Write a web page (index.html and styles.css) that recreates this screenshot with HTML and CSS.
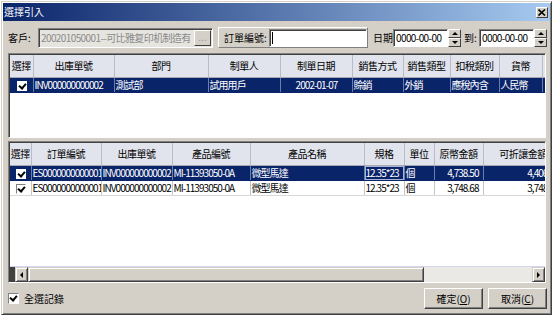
FILE: index.html
```html
<!DOCTYPE html>
<html>
<head>
<meta charset="utf-8">
<link rel="stylesheet" href="styles.css">
</head>
<body>
<div class="window">
  <div class="titlebar">
    <span class="title">選擇引入</span>
    <span class="close"><svg width="8" height="7" viewBox="0 0 8 7"><path d="M0.5 0.5 L7 6.5 M7 0.5 L0.5 6.5" stroke="#000" stroke-width="1.6" fill="none"/></svg></span>
  </div>
  <div class="content">
    <div class="toprow">
      <span class="lbl cust">客戶:</span>
      <div class="combo">
        <span class="combotxt">200201050001--可比雅复印机制造有</span>
        <span class="dots">...</span>
      </div>
      <div class="ordergroup">
        <span class="lbl">訂單編號:</span>
        <div class="field order"><span class="caret"></span></div>
      </div>
      <span class="lbl date-lbl">日期</span>
      <div class="date">
        <div class="field datefield">0000-00-00</div>
        <div class="spin"><span class="sb up"><i></i></span><span class="sb down"><i></i></span></div>
      </div>
      <span class="lbl to-lbl">到:</span>
      <div class="date">
        <div class="field datefield">0000-00-00</div>
        <div class="spin"><span class="sb up"><i></i></span><span class="sb down"><i></i></span></div>
      </div>
    </div>

    <div class="grid topgrid">
      <table class="tbl top">
        <colgroup>
          <col style="width:23px"><col style="width:81px"><col style="width:94px"><col style="width:72px"><col style="width:72px"><col style="width:51px"><col style="width:47px"><col style="width:49px"><col style="width:43px"><col style="width:3px">
        </colgroup>
        <thead>
          <tr><th>選擇</th><th>出庫單號</th><th>部門</th><th>制單人</th><th>制單日期</th><th>銷售方式</th><th>銷售類型</th><th>扣稅類別</th><th>貨幣</th><th></th></tr>
        </thead>
        <tbody>
          <tr class="sel"><td class="c"><span class="chk on"></span></td><td>INV000000000002</td><td>測試部</td><td>試用用戶</td><td class="c">2002-01-07</td><td>賒銷</td><td>外銷</td><td>應稅內含</td><td>人民幣</td><td></td></tr>
        </tbody>
      </table>
    </div>

    <div class="grid botgrid">
      <div class="gbody">
        <table class="tbl bot">
          <colgroup>
            <col style="width:21px"><col style="width:70px"><col style="width:71px"><col style="width:78px"><col style="width:114px"><col style="width:40px"><col style="width:30px"><col style="width:49px"><col style="width:80px">
          </colgroup>
          <thead>
            <tr><th>選擇</th><th>訂單編號</th><th>出庫單號</th><th>產品編號</th><th>產品名稱</th><th>規格</th><th>單位</th><th>原幣金額</th><th>可折讓金額</th></tr>
          </thead>
          <tbody>
            <tr class="sel"><td class="c"><span class="chk on"></span></td><td>ES0000000000001</td><td>INV000000000002</td><td>MI-11393050-0A</td><td>微型馬達</td><td class="focus">12.35*23</td><td>個</td><td class="r">4,738.50</td><td class="r">4,406.81</td></tr>
            <tr><td class="c"><span class="chk"></span></td><td>ES0000000000001</td><td>INV000000000002</td><td>MI-11393050-0A</td><td>微型馬達</td><td>12.35*23</td><td>個</td><td class="r">3,748.68</td><td class="r">3,748.68</td></tr>
          </tbody>
        </table>
      </div>
      <div class="hscroll">
        <span class="hs-dark"></span>
        <span class="hs-btn"><i class="arr-l"></i></span>
        <span class="hs-thumb"></span>
        <span class="hs-track"></span>
        <span class="hs-btn"><i class="arr-r"></i></span>
      </div>
    </div>

    <div class="bottomrow">
      <label class="selall"><span class="chk big"></span><span>全選記錄</span></label>
      <div class="buttons">
        <button class="btn">確定(<u>O</u>)</button>
        <button class="btn">取消(<u>C</u>)</button>
      </div>
    </div>
  </div>
</div>
</body>
</html>
```
FILE: styles.css
```css
* { box-sizing: border-box; margin: 0; padding: 0; }
body {
  width: 553px; height: 316px; overflow: hidden;
  background: #fff;
  font-family: "Noto Sans CJK TC", "Liberation Sans", sans-serif;
  font-size: 10px; color: #000;
}
.window {
  margin: 1px 0 0 1px;
  width: 551px; height: 314px;
  background: #d4d0c8;
  border: 1px solid; border-color: #d4d0c8 #404040 #404040 #d4d0c8;
  box-shadow: inset 1px 1px #fff, inset -1px -1px #808080;
  padding: 1px;
  display: flex; flex-direction: column;
}
.titlebar {
  height: 18px; flex: none;
  background: linear-gradient(to right, #0a246a, #a6caf0);
  display: flex; align-items: center; justify-content: space-between;
  padding: 0 2px 0 1px;
}
.title { color: #fff; font-size: 10px; line-height: 12px; }
.close {
  width: 12px; height: 11px;
  background: #d4d0c8;
  border: 1px solid; border-color: #fff #404040 #404040 #fff;
  display: flex; align-items: center; justify-content: center;
}
.content { flex: 1; padding: 6px 3px 0 5px; display: flex; flex-direction: column; }

/* top row */
.toprow { height: 21px; display: flex; align-items: center; flex: none; }
.lbl { white-space: nowrap; line-height: 12px; }
.cust { width: 30px; }
.combo {
  width: 175px; height: 20px; display: flex; align-items: center;
  background: #e6e4df;
  border: 1px solid; border-color: #808080 #fff #fff #808080;
  box-shadow: inset 1px 1px #404040;
  padding: 0 1px 0 2px; overflow: hidden;
}
.combotxt { flex: 1; min-width: 0; overflow: hidden; white-space: nowrap; color: #8a8a8a; letter-spacing: -0.6px; }
.dots {
  flex: none; width: 17px; height: 16px; line-height: 12px;
  text-align: center; color: #9a9a9a;
  background: #d4d0c8;
  border: 1px solid; border-color: #fff #404040 #404040 #fff;
}
.ordergroup {
  margin-left: 5px; width: 150px; height: 21px;
  display: flex; align-items: center;
  border: 1px solid; border-color: #fff #808080 #808080 #fff;
  padding-left: 5px;
}
.field {
  background: #fff; height: 18px;
  border: 1px solid; border-color: #808080 #fff #fff #808080;
  box-shadow: inset 1px 1px #404040;
  display: flex; align-items: center;
}
.order { flex: 1; margin-left: 2px; padding-left: 2px; }
.caret { width: 1px; height: 12px; background: #000; }
.date-lbl { margin-left: 5px; width: 20px; }
.to-lbl { margin-left: 3px; width: 15px; }
.date { display: flex; align-items: center; }
.datefield { width: 55px; padding-left: 2px; letter-spacing: -0.6px; white-space: nowrap; overflow: hidden; }
.spin { width: 13px; height: 18px; display: flex; flex-direction: column; }
.sb {
  flex: 1; background: #d4d0c8;
  border: 1px solid; border-color: #fff #404040 #404040 #fff;
  display: flex; align-items: center; justify-content: center;
}
.sb i { width: 0; height: 0; border-left: 3px solid transparent; border-right: 3px solid transparent; }
.up i { border-bottom: 3px solid #000; }
.down i { border-top: 3px solid #000; }

/* grids */
.grid {
  width: 538px; background: #fff; overflow: hidden;
  border: 1px solid; border-color: #808080 #fff #fff #808080;
  box-shadow: inset 1px 1px #404040;
  padding: 1px 0 0 1px;
}
.topgrid { margin-top: 5px; height: 85px; flex: none; }
.botgrid { margin-top: 3px; height: 142px; flex: none; display: flex; flex-direction: column; }
.gbody { flex: 1; overflow: hidden; border-bottom: 1px solid #d4d4ee; }
.tbl { border-collapse: collapse; table-layout: fixed; }
.tbl.top { width: 535px; }
.tbl.bot { width: 553px; }
.tbl th {
  height: 22px; background: #e1e4ec; font-weight: normal; text-align: center;
  border-right: 1px solid #b8bcc6; border-bottom: 1px solid #a4a8b0;
  white-space: nowrap; overflow: hidden; letter-spacing: -0.5px;
}
.tbl td {
  height: 15px; padding: 0 0 0 1px; white-space: nowrap; overflow: hidden;
  border-right: 1px solid #c4c4c4; border-bottom: 1px solid #d8d8d8;
  line-height: 13px; letter-spacing: -0.95px;
}
.tbl td.c { text-align: center; }
.tbl td.r { text-align: right; padding-right: 4px; }
.tbl tr.sel td { background: #0a246a; color: #fff; border-right-color: #6d7ca8; border-bottom-color: #0a246a; }
.tbl tr.sel td.focus { box-shadow: inset 0 0 0 1px #aab4d4; }
.chk {
  display: inline-block; vertical-align: middle;
  width: 10px; height: 10px; background: #fff;
  border: 1px solid; border-color: #808080 #fff #fff #808080;
  position: relative;
}
.chk::after {
  content: ""; position: absolute; left: 2px; top: 0px;
  width: 3px; height: 5px;
  border: solid #000; border-width: 0 2px 2px 0;
  transform: rotate(40deg);
}
.tbl tr.sel .chk { border-color: #fff; }
.chk.big { width: 11px; height: 11px; }

/* horizontal scrollbar */
.hscroll { height: 15px; flex: none; display: flex; }
.hs-dark { width: 5px; background: #404040; }
.hs-btn {
  width: 13px; background: #d4d0c8;
  border: 1px solid; border-color: #d4d0c8 #404040 #404040 #d4d0c8;
  box-shadow: inset 1px 1px #fff, inset -1px -1px #808080;
  display: flex; align-items: center; justify-content: center;
}
.arr-l { width: 0; height: 0; border-top: 3px solid transparent; border-bottom: 3px solid transparent; border-right: 3px solid #000; }
.arr-r { width: 0; height: 0; border-top: 3px solid transparent; border-bottom: 3px solid transparent; border-left: 3px solid #000; }
.hs-thumb {
  width: 396px; background: #d4d0c8;
  border: 1px solid; border-color: #d4d0c8 #404040 #404040 #d4d0c8;
  box-shadow: inset 1px 1px #fff, inset -1px -1px #808080;
}
.hs-track { flex: 1; background: #ebe9e5; }

/* bottom row */
.bottomrow { margin-top: 5px; height: 21px; display: flex; align-items: center; justify-content: space-between; flex: none; }
.selall { display: flex; align-items: center; gap: 5px; }
.buttons { display: flex; gap: 5px; }
.btn {
  width: 59px; height: 21px;
  font: inherit; color: #000;
  background: #d4d0c8;
  border: 1px solid; border-color: #fff #404040 #404040 #fff;
  box-shadow: inset -1px -1px #808080;
}
```
